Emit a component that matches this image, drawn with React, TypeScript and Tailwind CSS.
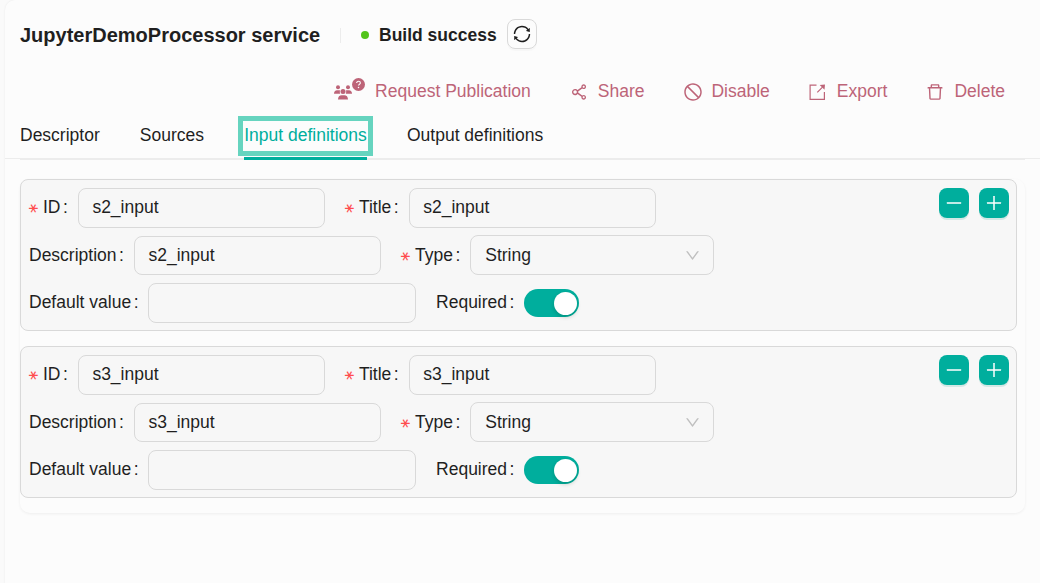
import type { ReactNode } from "react";
import {
  AiOutlineDelete,
  AiOutlineDown,
  AiOutlineMinus,
  AiOutlinePlus,
  AiOutlineShareAlt,
  AiOutlineStop,
  AiOutlineSync,
} from "react-icons/ai";

function PeopleIcon() {
  return (
    <svg className="mt-[4px]" width="18" height="15" viewBox="0 0 18 15" fill="currentColor">
      <circle cx="4" cy="2.2" r="2" />
      <circle cx="14" cy="2.200" r="2" />
      <circle cx="9" cy="6.600" r="2.500" />
      <path d="M0 8.800C0 6.500 1.200 5.200 3 5.200h1.600c.6 0 1.100.1 1.500.4A3.600 3.600 0 0 0 6.200 8.800H0zM18 8.800c0-2.300-1.200-3.600-3-3.600h-1.600c-.6 0-1.100.1-1.500.4a3.600 3.600 0 0 1-.1 3.200H18zM4 14.500c0-2.900 1.500-4.300 3.700-4.300h2.600c2.200 0 3.700 1.400 3.700 4.300z" />
    </svg>
  );
}

function QuestionBadge() {
  return (
    <svg className="-mt-[3px]" width="13" height="13" viewBox="0 0 13 13">
      <circle cx="6.500" cy="6.500" r="6.500" fill="currentColor" />
      <path d="M4.600 5.100c0-1.100.8-1.800 1.900-1.800s1.900.7 1.900 1.700c0 1.200-1.900 1.300-1.900 2.600" fill="none" stroke="#fcfcfc" strokeWidth="1.100" />
      <circle cx="6.500" cy="9.400" r=".75" fill="#fcfcfc" />
    </svg>
  );
}

function ExportIcon() {
  return (
    <svg className="mr-[10.500px]" width="17" height="17" viewBox="0 0 17 17" fill="none" stroke="currentColor" strokeWidth="1.200">
      <path d="M7.500 1.100H1.100v14.200h14.300V8M8.300 8.400l5.200-5.200" />
      <path d="M10.700.9 16 .4l-.5 5.300z" fill="currentColor" stroke="none" />
    </svg>
  );
}

function Action({ icon, label, className }: { icon: ReactNode; label: string; className: string }) {
  return (
    <button className={`flex items-center text-[#bd6478] ${className}`}>
      {icon}
      <span>{label}</span>
    </button>
  );
}

function Label({ text, required, className = "mr-[10px]" }: { text: string; required?: boolean; className?: string }) {
  return (
    <span className={`flex h-[27px] shrink-0 items-center whitespace-nowrap ${className}`}>
      {required && (
        <span className="mr-[5px] -ml-px w-[10px] rotate-90 text-center font-['DejaVu_Sans',sans-serif] text-[14px] text-[#ff4d4f]">∗</span>
      )}
      {text}
      <span className="ml-[2.500px]">:</span>
    </span>
  );
}

function TextField({ value, className }: { value: string; className: string }) {
  return (
    <input
      readOnly
      value={value}
      className={`rounded-[8px] border border-[#d9d9d9] bg-transparent px-[13.500px] outline-none ${className}`}
    />
  );
}

function SquareButton({ children }: { children: ReactNode }) {
  return (
    <button className="flex size-[30px] items-center justify-center rounded-[8px] bg-[#00ae9d] text-white shadow-[0_2px_0_rgba(5,145,130,0.150)]">
      {children}
    </button>
  );
}

function InputCard({ name }: { name: string }) {
  return (
    <section className="flex h-[152px] w-[997px] justify-between rounded-[8px] border border-[#d9d9d9] bg-[#f7f7f7] pt-2 pr-[7px] pl-2">
      <div className="flex flex-col">
        <div className="flex h-10 items-center">
          <Label text="ID" required />
          <TextField value={name} className="h-10 w-[247px] pb-[2px]" />
          <span className="w-5" />
          <Label text="Title" required />
          <TextField value={name} className="h-10 w-[247px] pb-[2px]" />
        </div>
        <div className="mt-[7px] flex h-10 items-end">
          <div className="flex h-[39px] items-center">
            <Label text="Description" />
            <TextField value={name} className="h-[39px] w-[247px]" />
            <span className="w-5" />
            <Label text="Type" required />
          </div>
          <div className="flex h-10 w-[244px] items-center justify-between rounded-[8px] border border-[#d9d9d9] pr-[12px] pl-[14px]">
            <span className="pt-px">String</span>
            <AiOutlineDown className="size-[17px] text-[#bfbfbf]" />
          </div>
        </div>
        <div className="mt-2 flex h-10 items-center">
          <Label text="Default value" className="mr-[9.500px]" />
          <TextField value="" className="h-10 w-[268px]" />
          <span className="w-5" />
          <Label text="Required" />
          <button role="switch" aria-checked="true" className="flex h-7 w-[55px] items-center justify-end rounded-full bg-[#00ae9d] pr-[2px]">
            <span className="size-[23px] rounded-full bg-white shadow-[0_2px_4px_rgba(0,35,11,0.200)]" />
          </button>
        </div>
      </div>
      <div className="flex gap-[10px]">
        <SquareButton>
          <AiOutlineMinus className="size-5" />
        </SquareButton>
        <SquareButton>
          <AiOutlinePlus className="size-5" />
        </SquareButton>
      </div>
    </section>
  );
}

export default function App() {
  return (
    <div className="h-[583px] w-[1040px] overflow-hidden bg-[#fafafa] pl-[5px] font-['Liberation_Sans',Arial,sans-serif] text-[17.500px] leading-[27.500px] text-[#1f1f1f]">
      <main className="h-[600px] rounded-tl-[10px] bg-[#fcfcfc] shadow-[0_0_2px_rgba(0,0,0,0.080)]">
        <header className="flex h-[69px] items-center pl-[15px]">
          <h1 className="w-[320px] pt-[2px] text-[20px] font-bold whitespace-nowrap">JupyterDemoProcessor service</h1>
          <span className="mt-[2px] h-[15px] w-px bg-[#ececec]" />
          <span className="mt-px ml-5 size-2 rounded-full bg-[#52c41a]" />
          <span className="ml-[10px] w-[118px] pt-[2px] font-bold whitespace-nowrap">Build success</span>
          <button className="-mt-px ml-[10px] flex size-[30px] items-center justify-center rounded-[8px] border border-[#d9d9d9] shadow-[0_2px_0_rgba(0,0,0,0.020)]">
            <AiOutlineSync className="size-5 shrink-0" />
          </button>
        </header>
        <div className="flex h-[44px] items-center justify-end pt-[2px] pr-[35px]">
          <Action
            className="mr-[38px]"
            icon={
              <span className="-mt-[3px] mr-[10px] flex h-5 w-[31px] items-start">
                <PeopleIcon />
                <QuestionBadge />
              </span>
            }
            label="Request Publication"
          />
          <Action className="mr-[38.500px]" icon={<AiOutlineShareAlt className="mr-[9px] size-5" />} label="Share" />
          <Action className="mr-[39.500px]" icon={<AiOutlineStop className="mr-[8.500px] size-5" />} label="Disable" />
          <Action className="mr-[38px]" icon={<ExportIcon />} label="Export" />
          <Action className="" icon={<AiOutlineDelete className="mr-[9px] size-5" />} label="Delete" />
        </div>
        <nav className="flex h-[46px] border-b border-[#ececec] pl-[15px]">
          <a className="mr-10 pt-[9px]">Descriptor</a>
          <a className="mr-[34px] pt-[9px]">Sources</a>
          <div className="flex w-[135px] flex-col items-center pt-[3px]">
            <a className="flex h-10 w-full shrink-0 items-center justify-center border-[5px] border-[#66d4bf] whitespace-nowrap text-[#00ae9d]">
              Input definitions
            </a>
            <span className="mt-px h-[3px] w-[123px] shrink-0 bg-[#00ae9d]" />
          </div>
          <a className="ml-[34px] pt-[9px]">Output definitions</a>
        </nav>
        <div className="ml-[15px] h-px w-[1005px] bg-[#ececec]" />
        <div className="mt-[19px] ml-[15px] flex h-[334px] w-[1005px] flex-col gap-[15px] rounded-[10px] shadow-[0_1px_3px_rgba(0,0,0,0.060)]">
          <InputCard name="s2_input" />
          <InputCard name="s3_input" />
        </div>
      </main>
    </div>
  );
}
